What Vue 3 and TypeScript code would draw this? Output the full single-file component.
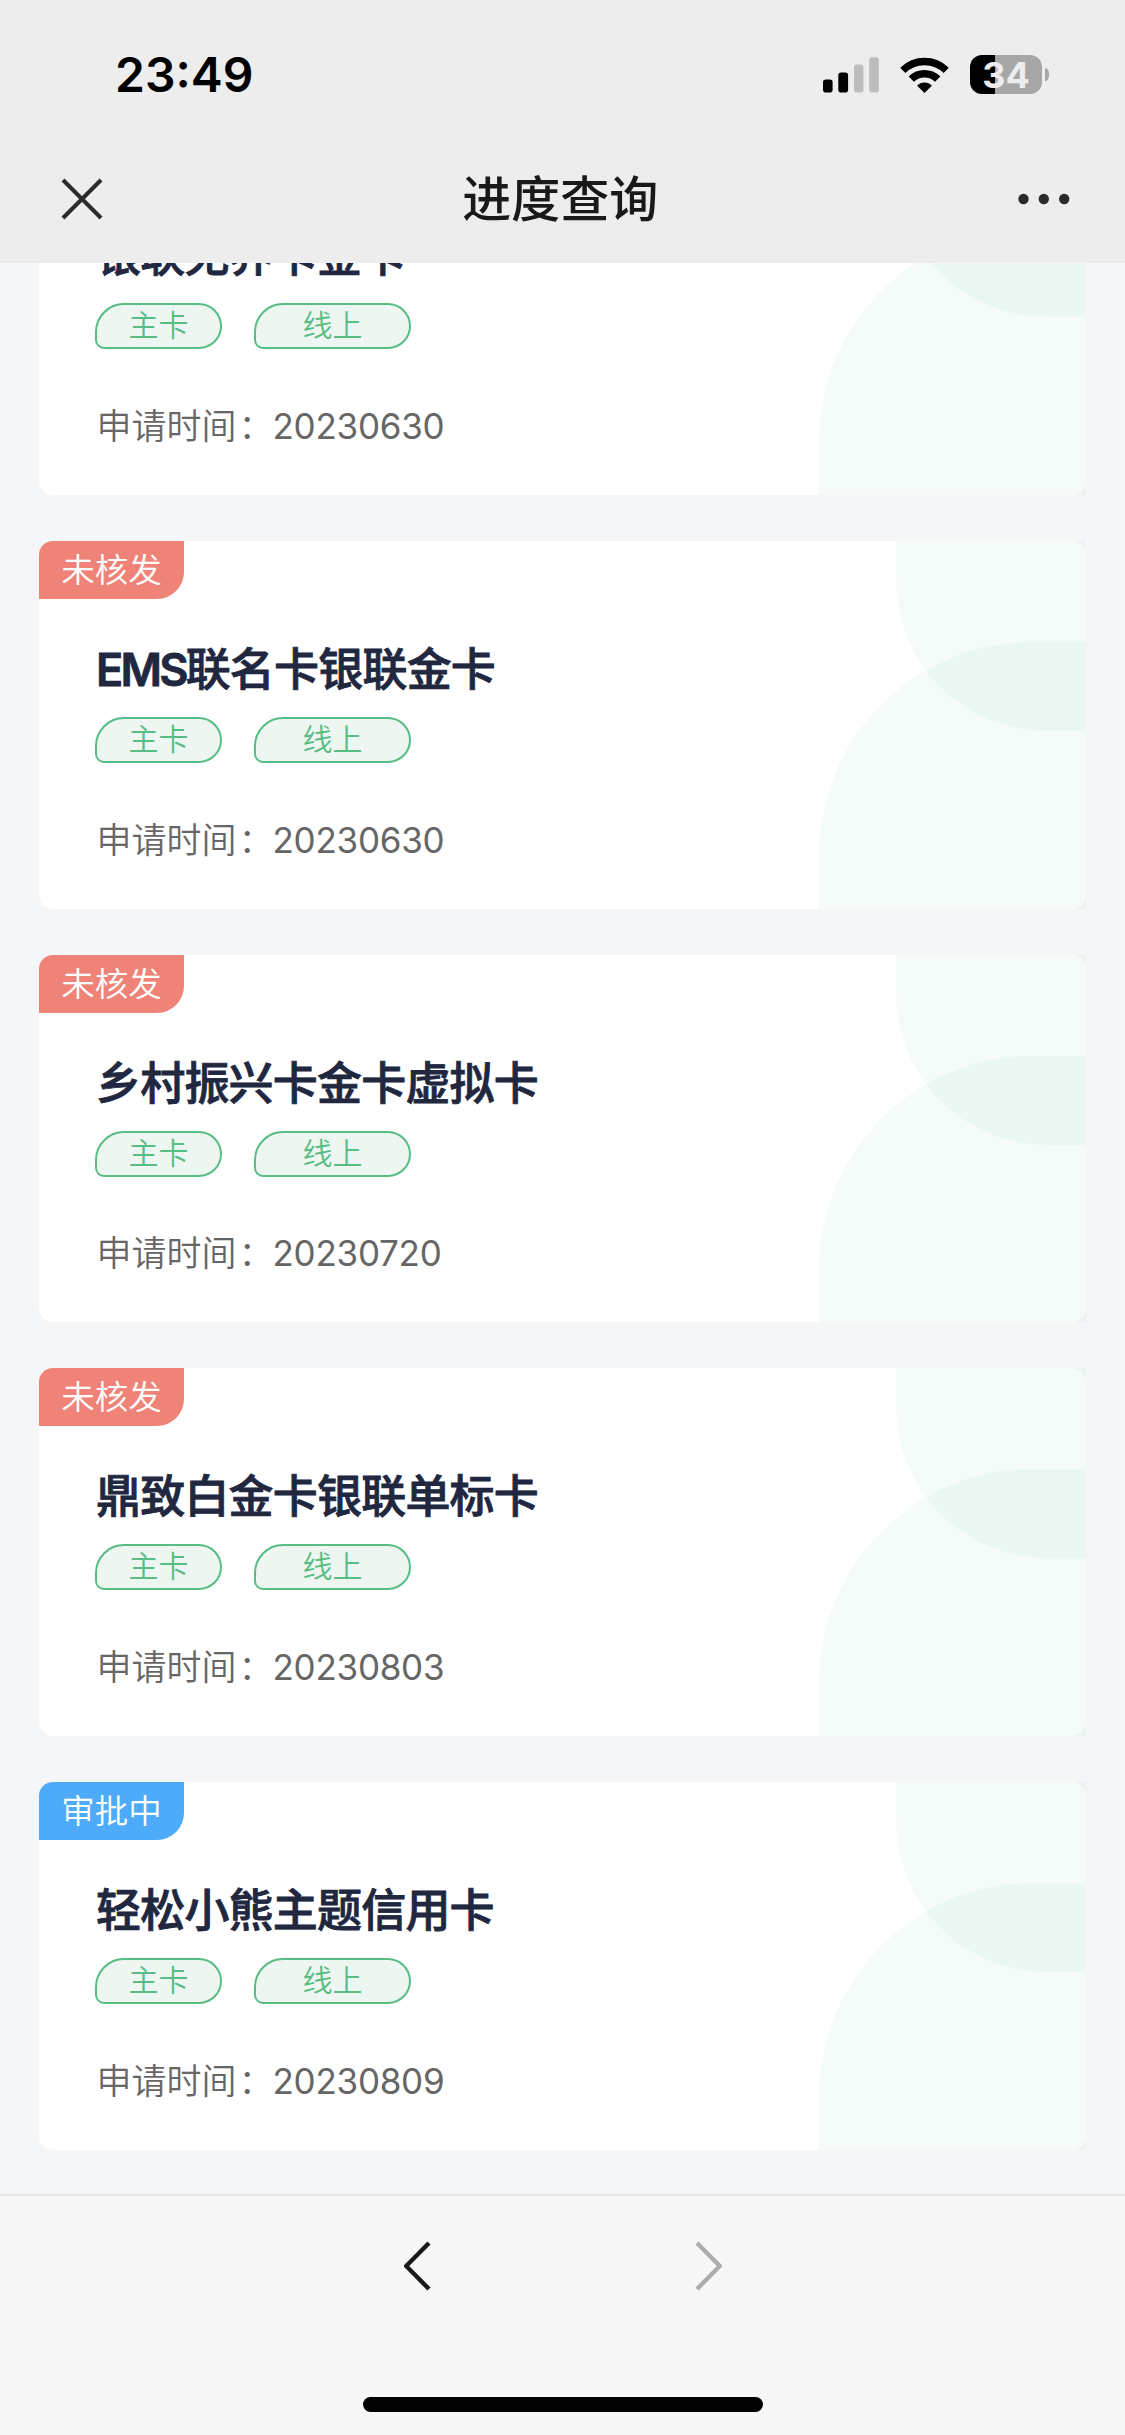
<script setup lang="ts">
interface Application {
  id: number
  status: string
  tone: 'rejected' | 'pending'
  name: string
  date: string
}

const tags = [
  { text: '主卡', kind: 'main' },
  { text: '线上', kind: 'online' },
]

const applications: Application[] = [
  { id: 1, status: '未核发', tone: 'rejected', name: '银联无界卡金卡', date: '20230630' },
  { id: 2, status: '未核发', tone: 'rejected', name: 'EMS联名卡银联金卡', date: '20230630' },
  { id: 3, status: '未核发', tone: 'rejected', name: '乡村振兴卡金卡虚拟卡', date: '20230720' },
  { id: 4, status: '未核发', tone: 'rejected', name: '鼎致白金卡银联单标卡', date: '20230803' },
  { id: 5, status: '审批中', tone: 'pending', name: '轻松小熊主题信用卡', date: '20230809' },
]

// Latin brand prefixes are set tighter than the Chinese part of the name.
const splitName = (name: string) => {
  const latin = name.match(/^[A-Z]+/)?.[0] ?? ''
  return { latin, rest: name.slice(latin.length) }
}
</script>

<template>
  <div class="screen">
    <header class="top">
      <div class="status">
        <span class="clock">23:49</span>
        <div class="indicators">
          <svg class="signal" width="56" height="36" viewBox="0 0 56 36">
            <rect x="0" y="22.4" width="9.6" height="13.2" rx="2.8" fill="#000" />
            <rect x="15.3" y="15.4" width="9.8" height="20.2" rx="2.8" fill="#000" />
            <rect x="31" y="7.4" width="9.4" height="28.2" rx="2.8" fill="#bdbdbd" />
            <rect x="46.2" y="0.2" width="9.6" height="35.4" rx="2.8" fill="#bdbdbd" />
          </svg>
          <svg class="wifi" width="49" height="36" viewBox="0 0 49 36">
            <g fill="none" stroke="#000" stroke-width="7.4">
              <path d="M2.8 13.4 A31 31 0 0 1 46.2 13.4" />
              <path d="M11.3 22.2 A18.8 18.8 0 0 1 37.7 22.2" />
            </g>
            <path d="M24.5 36 L17.4 28.9 Q17.1 28.4 17.7 27.9 A10.6 10.6 0 0 1 31.3 27.9 Q31.9 28.4 31.6 28.9 Z" fill="#000" />
          </svg>
          <div class="battery">
            <div class="cell">34</div>
            <div class="nub"></div>
          </div>
        </div>
      </div>
      <div class="navbar">
        <svg class="close" width="42" height="42" viewBox="0 0 42 42">
          <path d="M2 2 L40 40 M40 2 L2 40" stroke="#2b2b2b" stroke-width="4" fill="none" />
        </svg>
        <h1 class="heading">进度查询</h1>
        <svg class="more" width="52" height="12" viewBox="0 0 52 12">
          <circle cx="5.5" cy="6" r="5.2" fill="#2b2b2b" />
          <circle cx="25.8" cy="6" r="5.2" fill="#2b2b2b" />
          <circle cx="46.2" cy="6" r="5.2" fill="#2b2b2b" />
        </svg>
      </div>
    </header>

    <main class="content">
      <div class="list">
        <article v-for="item in applications" :key="item.id" class="card">
          <div class="decor decor-top"></div>
          <div class="decor decor-bottom"></div>
          <span class="badge" :class="item.tone">{{ item.status }}</span>
          <h2 class="name"><span class="latin">{{ splitName(item.name).latin }}</span>{{ splitName(item.name).rest }}</h2>
          <div class="tags">
            <span v-for="tag in tags" :key="tag.kind" class="tag" :class="tag.kind">{{ tag.text }}</span>
          </div>
          <p class="applied"><span class="label">申请时<span class="last">间</span>：</span><span class="date">{{ item.date }}</span></p>
        </article>
      </div>
    </main>

    <footer class="bottom">
      <div class="history">
        <svg width="30" height="50" viewBox="0 0 30 50">
          <path d="M26 2 L3.2 25 L26 48" stroke="#1a1a1a" stroke-width="4.4" stroke-linejoin="round" fill="none" />
        </svg>
        <svg width="30" height="50" viewBox="0 0 30 50">
          <path d="M4 2 L26.8 25 L4 48" stroke="#adadad" stroke-width="4.4" stroke-linejoin="round" fill="none" />
        </svg>
      </div>
      <div class="home"></div>
    </footer>
  </div>
</template>

<style>
body {
  margin: 0;
  background: #f4f6f8;
}
</style>

<style scoped>
.screen {
  display: flex;
  flex-direction: column;
  width: 1125px;
  height: 2435px;
  overflow: hidden;
  background: #f4f6f8;
  font-family: Inter, "Noto Sans CJK SC", sans-serif;
}

.top {
  flex: none;
  height: 262.5px;
  background: #ededed;
}

.status {
  display: flex;
  justify-content: space-between;
  height: 135px;
  padding: 0 76px 0 115px;
}

.clock {
  margin-top: 45px;
  line-height: 60px;
  font-size: 48px;
  font-weight: 600;
  color: #000;
}

.indicators {
  display: flex;
  align-items: flex-start;
  padding-top: 54.5px;
}

.signal {
  margin: 2px 21px 0 0;
}

.wifi {
  margin: 2px 21.5px 0 0;
}

.battery {
  display: flex;
  align-items: center;
  gap: 3px;
}

.cell {
  width: 72px;
  height: 39.5px;
  border-radius: 12px;
  background: linear-gradient(90deg, #000 25px, #a6a6a6 25px);
  color: #ededed;
  font-size: 36px;
  font-weight: 700;
  line-height: 40px;
  text-align: center;
}

.nub {
  width: 4px;
  height: 13px;
  border-radius: 0 5px 5px 0 / 0 6.5px 6.5px 0;
  background: #a6a6a6;
}

.navbar {
  display: flex;
  align-items: center;
  justify-content: space-between;
  height: 127px;
  padding: 0 55px 0 60.5px;
}

.heading {
  margin: 0;
  padding-top: 2px;
  line-height: 60px;
  font-size: 49px;
  font-weight: 500;
  color: #191919;
}

.content {
  flex: 1;
  min-height: 0;
  overflow: hidden;
}

.list {
  display: flex;
  flex-direction: column;
  gap: 46px;
  margin: -135.2px 39px 0;
}

.card {
  position: relative;
  display: flex;
  flex-direction: column;
  align-items: flex-start;
  height: 367.67px;
  border-radius: 14px;
  background: #fff;
}

.decor {
  position: absolute;
  right: 0;
  background: rgba(80, 180, 140, 0.055);
}

.decor-top {
  top: 0;
  width: 190px;
  height: 190px;
  border-bottom-left-radius: 151px;
}

.decor-bottom {
  bottom: 0;
  width: 267px;
  height: 266.5px;
  border-top-left-radius: 213px;
}

.badge {
  width: 145px;
  height: 58px;
  border-radius: 14px 0 27px 0;
  color: #fff;
  font-size: 33.5px;
  font-weight: 350;
  line-height: 58px;
  text-align: center;
}

.rejected {
  background: #ef8377;
}

.pending {
  background: #4dabf9;
}

.name {
  margin: 45.9px 0 0 57px;
  line-height: 50px;
  font-size: 45px;
  font-weight: 500;
  letter-spacing: -0.8px;
  color: #20273f;
  -webkit-text-stroke: 0.8px #20273f;
}

.latin {
  font-weight: 600;
  letter-spacing: -2.8px;
}

.tags {
  display: flex;
  gap: 32px;
  margin: 22.2px 0 0 56px;
}

.tag {
  box-sizing: border-box;
  height: 46px;
  border: 2px solid #57bd84;
  border-radius: 29px 23px 23px 9px;
  background: #eef6f2;
  color: #57bd84;
  font-size: 30px;
  font-weight: 350;
  line-height: 41px;
  text-align: center;
}

.main {
  width: 127px;
}

.online {
  width: 157px;
}

.applied {
  display: flex;
  margin: 56.7px 0 0 57.5px;
  line-height: 40px;
  font-size: 35px;
  color: #666;
}

.label {
  width: 176px;
  font-weight: 350;
  white-space: nowrap;
}

.last {
  letter-spacing: 2px;
}

.date {
  letter-spacing: -0.25px;
}

.bottom {
  flex: none;
  box-sizing: border-box;
  display: flex;
  flex-direction: column;
  justify-content: space-between;
  align-items: center;
  height: 241px;
  padding: 45px 0 23px;
  border-top: 2px solid #e5e6e7;
  background: #f7f7f7;
}

.history {
  display: flex;
  justify-content: space-between;
  width: 320px;
}

.home {
  width: 400px;
  height: 15px;
  border-radius: 7.5px;
  background: #000;
}
</style>
